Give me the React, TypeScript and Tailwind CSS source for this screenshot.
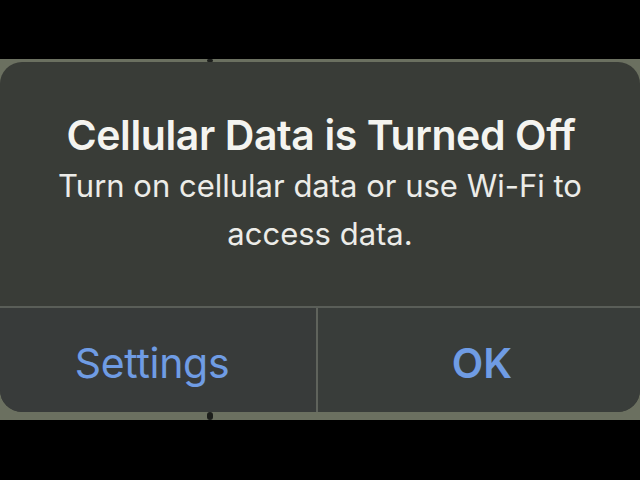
import React from 'react';

const font = { fontFamily: 'Inter, "Noto Sans", "Liberation Sans", sans-serif' };

export default function App() {
  return (
    <div className="w-[640px] h-[480px] bg-black flex flex-col overflow-hidden" style={font}>
      <div className="h-[59px] shrink-0" />
      {/* olive frame peeking out behind the alert */}
      <div className="relative bg-[#6b7060] pt-[3px] pb-[8px]">
        <span className="absolute left-[207px] top-0 w-[6px] h-[3px] rounded-full bg-[#1c1e1b]" />
        <span className="absolute left-[207px] bottom-0 w-[6px] h-[8px] rounded-full bg-[#1c1e1b]" />
        <div className="bg-[#393c37] rounded-[22px] flex flex-col">
          <div className="h-[244px] flex flex-col items-center pt-[46px]">
            <h1 className="text-[41px] leading-[54px] font-semibold text-[#f4f4f0] tracking-[-0.4px] pl-[2px]">
              Cellular Data is Turned Off
            </h1>
            <p className="text-[31px] leading-[48px] text-[#ecece8] text-center w-[560px]">
              Turn on cellular data or use Wi-Fi to access data.
            </p>
          </div>
          <div className="h-[2px] bg-[#5a5e58]" />
          <div className="flex h-[104px]">
            <button className="w-[316px] flex items-center justify-center pt-[7px] pr-[12px] text-[#6f9ce4] text-[41px] font-normal tracking-[-0.3px] bg-[#383b3a] rounded-bl-[22px]">
              Settings
            </button>
            <div className="w-[2px] bg-[#5f635c]" />
            <button className="flex-1 flex items-center justify-center pt-[7px] pl-[6px] text-[#6f9ce4] text-[41px] font-semibold bg-[#393d3a] rounded-br-[22px]">
              OK
            </button>
          </div>
        </div>
      </div>
    </div>
  );
}
